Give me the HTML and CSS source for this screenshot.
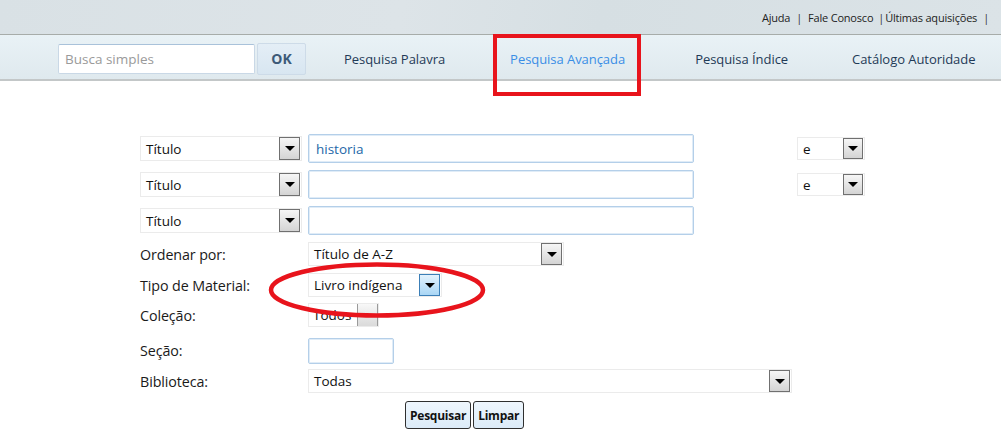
FILE: index.html
```html
<!DOCTYPE html>
<html lang="pt-BR">
<head>
<meta charset="utf-8">
<title>Pesquisa Avançada</title>
<link rel="stylesheet" href="styles.css">
</head>
<body>
<header class="topbar">
  <nav class="toplinks">
    <a href="#">Ajuda</a><span class="sep">|</span><a href="#">Fale Conosco</a><span class="sep tight">|</span><a href="#">Últimas aquisições</a><span class="sep">|</span>
  </nav>
</header>
<div class="navbar">
  <form class="quick">
    <input class="quick-input" type="text" placeholder="Busca simples">
    <button class="quick-ok" type="button">OK</button>
  </form>
  <ul class="menu">
    <li class="m1"><a href="#">Pesquisa Palavra</a></li>
    <li class="m2"><a href="#" class="active">Pesquisa Avançada</a></li>
    <li class="m3"><a href="#">Pesquisa Índice</a></li>
    <li class="m4"><a href="#">Catálogo Autoridade</a></li>
  </ul>
</div>
<div class="mark-rect"></div>

<main class="form">
  <div class="row r1">
    <div class="sel w-field"><span class="val">Título</span><span class="btn"><i></i></span></div>
    <div class="inp w-term"><span class="typed">historia</span></div>
    <div class="sel w-op"><span class="val">e</span><span class="btn"><i></i></span></div>
  </div>
  <div class="row r2">
    <div class="sel w-field"><span class="val">Título</span><span class="btn"><i></i></span></div>
    <div class="inp w-term"></div>
    <div class="sel w-op"><span class="val">e</span><span class="btn"><i></i></span></div>
  </div>
  <div class="row r3">
    <div class="sel w-field"><span class="val">Título</span><span class="btn"><i></i></span></div>
    <div class="inp w-term"></div>
  </div>
  <div class="row r4">
    <label class="lbl">Ordenar por:</label>
    <div class="sel w-order"><span class="val">Título de A-Z</span><span class="btn"><i></i></span></div>
  </div>
  <div class="row r5">
    <label class="lbl">Tipo de Material:</label>
    <div class="sel w-tipo"><span class="val">Livro indígena</span><span class="btn blue"><i></i></span></div>
  </div>
  <div class="row r6">
    <label class="lbl">Coleção:</label>
    <div class="sel w-col"><span class="val clip">Todos</span><span class="btn plain"></span></div>
  </div>
  <div class="row r7">
    <label class="lbl">Seção:</label>
    <div class="inp w-secao"></div>
  </div>
  <div class="row r8">
    <label class="lbl">Biblioteca:</label>
    <div class="sel w-bib"><span class="val">Todas</span><span class="btn"><i></i></span></div>
  </div>
  <div class="row r9">
    <button class="act" type="button">Pesquisar</button><button class="act" type="button">Limpar</button>
  </div>
</main>

<svg class="mark-ellipse" width="230" height="64" viewBox="0 0 230 64">
  <ellipse cx="115" cy="32" rx="106" ry="25.5" fill="none" stroke="#e8141c" stroke-width="4.5"/>
</svg>
</body>
</html>
```
FILE: styles.css
```css
* { box-sizing: border-box; }
html, body { margin: 0; padding: 0; }
body {
  width: 1001px;
  height: 432px;
  overflow: hidden;
  background: #ffffff;
  font-family: "Open Sans", "DejaVu Sans", sans-serif;
  color: #1a1a1a;
  position: relative;
}

/* top bar */
.topbar {
  height: 35px;
  background: linear-gradient(100deg, #d9e1e5 0%, #dde4e8 40%, #d6dfe3 60%, #dbe3e7 100%);
  border-bottom: 1px solid #a7aca9;
  display: flex;
  justify-content: flex-end;
  align-items: center;
  padding: 0 6px 0 0;
}
.toplinks {
  font-size: 11px;
  color: #222;
  letter-spacing: -0.2px;
  display: flex;
  align-items: center;
}
.toplinks a { color: #222; text-decoration: none; }
.toplinks .sep { margin: 0 6px; color: #333; }
.toplinks .sep.tight { margin: 0 1px 0 5px; }

/* nav bar */
.navbar {
  height: 46px;
  background: linear-gradient(#e9f2f6, #dfe9ee);
  border-bottom: 2px solid #c3c7c8;
  display: flex;
  align-items: center;
  padding-left: 58px;
}
.quick { display: flex; align-items: center; margin-top: 3px; }
.quick-input {
  width: 197px;
  height: 30px;
  border: 1px solid #c9d8e6;
  border-top-color: #a9c2da;
  border-radius: 2px;
  background: #fff;
  font-family: inherit;
  font-size: 13.5px;
  padding: 0 6px;
  color: #333;
}
.quick-input::placeholder { color: #9a9a9a; }
.quick-ok {
  width: 49px;
  height: 32px;
  margin-left: 2px;
  border: 1px solid #cddbe8;
  border-radius: 2px;
  background: linear-gradient(#e4eef6, #d8e6f1);
  font-family: inherit;
  font-weight: 700;
  font-size: 14px;
  color: #3d5a78;
  padding: 0;
}
.menu {
  list-style: none;
  margin: 0;
  padding: 3px 0 0 0;
  display: flex;
  font-size: 13px;
  letter-spacing: -0.05px;
}
.menu a { color: #1f3a57; text-decoration: none; }
.menu a.active { color: #3a8ee6; }
.menu .m1 { margin-left: 38px; }
.menu .m2 { margin-left: 65px; }
.menu .m3 { margin-left: 70px; }
.menu .m4 { margin-left: 64px; }

.mark-rect {
  position: absolute;
  left: 493px;
  top: 34px;
  width: 148px;
  height: 62px;
  border: 4px solid #e8141c;
}

/* form */
.form {
  padding-left: 140px;
  display: flex;
  flex-direction: column;
  margin-top: 53px;
}
.row { display: flex; align-items: center; }
.r1 { height: 29px; }
.r2 { height: 29px; margin-top: 7px; }
.r3 { height: 29px; margin-top: 7px; }
.r4 { height: 24px; margin-top: 7px; }
.r5 { height: 24px; margin-top: 7px; }
.r6 { height: 24px; margin-top: 6px; }
.r7 { height: 25px; margin-top: 11px; }
.r8 { height: 24px; margin-top: 6px; }
.r9 { height: 28px; margin-top: 8px; padding-left: 265px; }

.lbl {
  width: 168px;
  font-size: 14.3px;
  color: #1a1a1a;
  letter-spacing: -0.1px;
}

.sel {
  height: 25px;
  border: 1px solid #ebebeb;
  background: #fff;
  display: flex;
  align-items: center;
  justify-content: space-between;
  padding-left: 5px;
  padding-right: 1px;
  font-size: 13.5px;
  color: #111;
  overflow: hidden;
}
.sel .val { white-space: nowrap; }
.btn {
  flex: none;
  width: 21px;
  height: 23px;
  border: 1px solid #707070;
  background: linear-gradient(#f6f6f6, #d4d4d4);
  display: flex;
  align-items: center;
  justify-content: center;
}
.btn i {
  width: 0;
  height: 0;
  border-left: 5px solid transparent;
  border-right: 5px solid transparent;
  border-top: 5px solid #000;
}
.btn.blue {
  border-color: #3c7fb7;
  background: linear-gradient(#e3f2fd, #a9d6f5);
}
.btn.plain { border-color: #9a9a9a; background: linear-gradient(#f8f8f8, #dadada); }

.w-field { width: 162px; }
.w-op { width: 68px; height: 23px; margin-left: 103px; }
.w-op .btn { height: 21px; width: 20px; }
.w-order { width: 256px; height: 24px; }
.w-order .btn { height: 22px; }
.w-tipo { width: 134px; height: 24px; }
.w-tipo .btn { height: 22px; }
.w-col { width: 71px; height: 24px; padding-left: 4px; }
.w-col .btn { height: 24px; margin-right: -1px; }
.w-col .val.clip { width: 46px; overflow: hidden; }
.w-bib { width: 484px; height: 24px; }
.w-bib .btn { height: 22px; }

.inp {
  height: 29px;
  border: 1px solid #b4cfe9;
  box-shadow: inset 0 0 0 1px #e0ecf7;
  border-radius: 2px;
  background: #fff;
  display: flex;
  align-items: center;
  padding-left: 7px;
  font-size: 13.5px;
}
.w-term { width: 386px; margin-left: 6px; }
.w-secao { width: 86px; height: 26px; }
.typed { color: #2467a8; }

.act {
  height: 28px;
  padding: 0 4px;
  border: 1px solid #2f2f2f;
  border-radius: 3px;
  background: linear-gradient(#eef6fd, #dcebf8);
  font-family: "Open Sans", "DejaVu Sans", sans-serif;
  font-weight: 700;
  font-size: 12px;
  letter-spacing: -0.25px;
  color: #111;
  margin-right: 2px;
}

.mark-ellipse {
  position: absolute;
  left: 262px;
  top: 258px;
}
```
